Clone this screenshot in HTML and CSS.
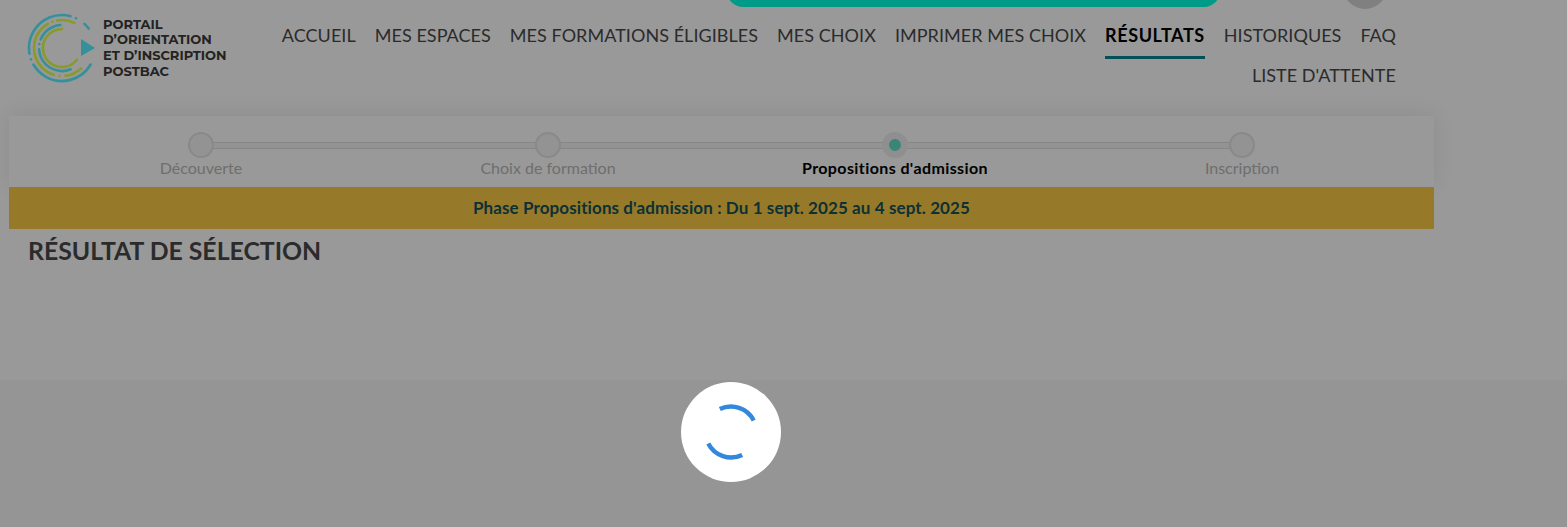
FILE: index.html
```html
<!DOCTYPE html>
<html lang="fr">
<head>
  <meta charset="UTF-8">
  <title>Résultat de sélection</title>
  <link rel="stylesheet" href="styles.css">
</head>
<body>
  <div class="page">
    <!-- Top strip, mostly cut by the window edge -->
    <div class="top-strip">
      <div class="top-bar"></div>
      <div class="avatar"></div>
    </div>

    <header class="header">
      <div class="logo">
        <svg class="logo-mark" width="70" height="70" viewBox="-35 -35 70 70" fill="none" stroke-linecap="round" stroke-width="2.6">
          <g stroke="#36909c">
            <circle r="33" pathLength="360" stroke-dasharray="120 10 0 10 115 10 0 18 11 66" transform="rotate(30)"/>
            <circle r="23" pathLength="360" stroke-dasharray="109 13 0 12 64 162" transform="rotate(68)"/>
          </g>
          <g stroke="#889a2b">
            <circle r="28" pathLength="360" stroke-dasharray="36 12 0 12 133 10 0 10 36 111" transform="rotate(47)"/>
            <circle r="19" pathLength="360" stroke-dasharray="232 128" transform="rotate(38)"/>
          </g>
          <polygon points="19,-9 33,0 19,8" fill="#36909c"/>
        </svg>
        <div class="logo-text">PORTAIL<br>D’ORIENTATION<br>ET D’INSCRIPTION<br>POSTBAC</div>
      </div>
      <nav class="nav-links">
        <a href="#">ACCUEIL</a>
        <a href="#">MES ESPACES</a>
        <a href="#">MES FORMATIONS ÉLIGIBLES</a>
        <a href="#">MES CHOIX</a>
        <a href="#">IMPRIMER MES CHOIX</a>
        <a href="#" class="active">RÉSULTATS</a>
        <a href="#">HISTORIQUES</a>
        <a href="#">FAQ</a>
        <a href="#">LISTE D'ATTENTE</a>
      </nav>
    </header>

    <main class="main-container">
      <div class="stepper">
        <div class="step"><span class="step-dot"></span><span class="step-label">Découverte</span></div>
        <div class="step"><span class="step-dot"></span><span class="step-label">Choix de formation</span></div>
        <div class="step current"><span class="step-dot"></span><span class="step-label">Propositions d'admission</span></div>
        <div class="step"><span class="step-dot"></span><span class="step-label">Inscription</span></div>
      </div>
      <div class="phase-banner">Phase Propositions d'admission : Du 1 sept. 2025 au 4 sept. 2025</div>
      <h1 class="page-title">RÉSULTAT DE SÉLECTION</h1>
    </main>
  </div>

  <!-- Loading spinner over the page -->
  <div class="loader">
    <svg width="60" height="60" viewBox="0 0 60 60" fill="none">
      <circle cx="30" cy="30" r="25.5" stroke="#3388dd" stroke-width="4.4" pathLength="360" stroke-dasharray="89 91 89 91" transform="rotate(-116 30 30)"/>
    </svg>
  </div>
</body>
</html>
```

FILE: styles.css
```css
/* Base Styles */
body {
  margin: 0;
  height: 527px;
  overflow: hidden;
  position: relative;
  background: #959595;
  font-family: 'Lato', Arial, sans-serif;
  color: #2b2b2b;
}

.page {
  height: 380px;
  background: #999999;
}

/* Top strip */
.top-strip {
  display: flex;
  align-items: flex-start;
  height: 10px;
  padding-left: 727px;
  overflow: hidden;
}
.top-bar {
  width: 493px;
  height: 30px;
  margin-top: -23px;
  background: #009b88;
  border-radius: 0 0 16px 16px;
}
.avatar {
  flex: none;
  width: 44px;
  height: 44px;
  margin: -35px 0 0 123px;
  border-radius: 50%;
  background: #808080;
}

/* Header */
.header {
  display: flex;
  align-items: flex-start;
  height: 106px;
  padding: 0 171px 0 28px;
}
.logo {
  flex: none;
  display: flex;
  align-items: center;
  gap: 10px;
  width: 230px;
  height: 76px;
}
.logo-mark {
  flex: none;
  margin-left: -1px;
  margin-right: -4px;
}
.logo-text {
  font-family: 'Montserrat', 'Open Sans', Arial, sans-serif;
  font-size: 13px;
  font-weight: 700;
  line-height: 15.7px;
  color: #232323;
  white-space: nowrap;
}
.nav-links {
  flex: 1;
  display: flex;
  flex-wrap: wrap;
  justify-content: flex-end;
  column-gap: 19px;
}
.nav-links a {
  box-sizing: border-box;
  height: 49px;
  margin-bottom: -9px;
  padding-top: 10px;
  line-height: 30px;
  font-size: 18px;
  letter-spacing: 0.05px;
  text-decoration: none;
  color: #2b2b2b;
  white-space: nowrap;
}
.nav-links a.active {
  border-bottom: 3px solid #024f57;
  font-weight: 700;
  letter-spacing: 0.6px;
  color: #000000;
}

/* Main */
.main-container {
  width: 1425px;
  margin-left: 9px;
}
.stepper {
  display: grid;
  grid-template-columns: repeat(4, 347px);
  height: 71px;
  padding: 0 18.5px;
  box-sizing: border-box;
  box-shadow: 0 -2px 20px rgba(0, 0, 0, 0.08);
  background-image: linear-gradient(#868686 1px, #939393 1px, #939393 6px, #868686 6px);
  background-size: 1041px 7px;
  background-position: 192px 26px;
  background-repeat: no-repeat;
}
.step {
  display: flex;
  flex-direction: column;
  align-items: center;
  padding-top: 16px;
}
.step-dot {
  box-sizing: border-box;
  width: 26px;
  height: 26px;
  border: 2px solid #898989;
  border-radius: 50%;
  background: #939393;
}
.step-label {
  margin-top: 0;
  font-size: 16px;
  line-height: 20px;
  color: #6e6e6e;
}
.current .step-dot {
  border: 7.5px solid #8f8f8f;
  background: #3a8578;
}
.current .step-label {
  font-weight: 700;
  letter-spacing: 0.4px;
  color: #000000;
}
.phase-banner {
  height: 42px;
  line-height: 42px;
  text-align: center;
  font-size: 17px;
  font-weight: 700;
  letter-spacing: 0.1px;
  color: #0b3136;
  background: #967a2a;
}
.page-title {
  margin: 7px 0 0 19px;
  font-size: 24.8px;
  line-height: 30px;
  font-weight: 700;
  color: #2b2b2b;
}

/* Loader */
.loader {
  position: absolute;
  left: 681px;
  top: 382px;
  display: flex;
  align-items: center;
  justify-content: center;
  width: 100px;
  height: 100px;
  border-radius: 50%;
  background: #ffffff;
}
```
